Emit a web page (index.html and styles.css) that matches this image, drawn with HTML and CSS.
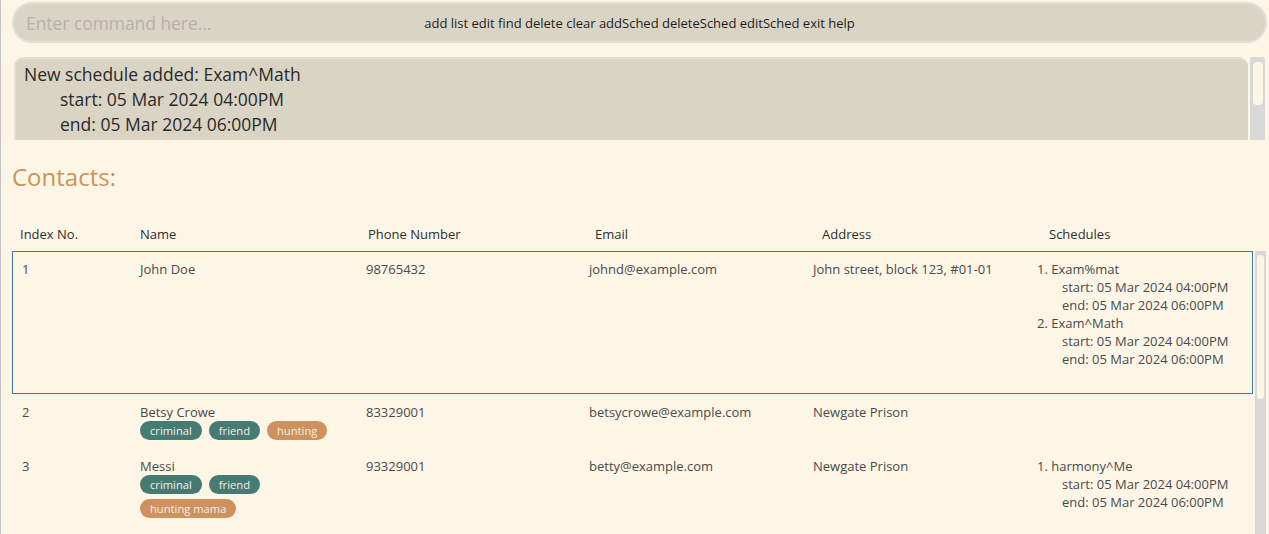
FILE: index.html
```html
<!DOCTYPE html>
<html>
<head>
<meta charset="utf-8">
<link rel="stylesheet" href="styles.css">
</head>
<body>
<div class="app">
  <div class="cmd">
    <span class="placeholder">Enter command here...</span>
    <span class="cmds">add list edit find delete clear addSched deleteSched editSched exit help</span>
    <span></span>
  </div>

  <div class="result-wrap">
    <div class="result">
      <div>New schedule added: Exam^Math</div>
      <div class="ind">start: 05 Mar 2024 04:00PM</div>
      <div class="ind">end: 05 Mar 2024 06:00PM</div>
    </div>
    <div class="rscroll"><div class="rthumb"></div></div>
  </div>

  <div class="title">Contacts:</div>

  <div class="header">
    <span>Index No.</span>
    <span>Name</span>
    <span>Phone Number</span>
    <span>Email</span>
    <span>Address</span>
    <span>Schedules</span>
  </div>

  <div class="list-wrap">
    <div class="list">
      <div class="row selected">
        <span>1</span>
        <div class="name"><div>John Doe</div></div>
        <span>98765432</span>
        <span>johnd@example.com</span>
        <span>John street, block 123, #01-01</span>
        <div class="scheds">
          <div>1. Exam%mat</div>
          <div class="ind">start: 05 Mar 2024 04:00PM</div>
          <div class="ind">end: 05 Mar 2024 06:00PM</div>
          <div>2. Exam^Math</div>
          <div class="ind">start: 05 Mar 2024 04:00PM</div>
          <div class="ind">end: 05 Mar 2024 06:00PM</div>
        </div>
      </div>
      <div class="row">
        <span>2</span>
        <div class="name">
          <div>Betsy Crowe</div>
          <div class="tags"><span class="tag teal">criminal</span><span class="tag teal">friend</span><span class="tag orange">hunting</span></div>
        </div>
        <span>83329001</span>
        <span>betsycrowe@example.com</span>
        <span>Newgate Prison</span>
        <div></div>
      </div>
      <div class="row">
        <span>3</span>
        <div class="name">
          <div>Messi</div>
          <div class="tags"><span class="tag teal">criminal</span><span class="tag teal">friend</span><span class="tag orange">hunting mama</span></div>
        </div>
        <span>93329001</span>
        <span>betty@example.com</span>
        <span>Newgate Prison</span>
        <div class="scheds">
          <div>1. harmony^Me</div>
          <div class="ind">start: 05 Mar 2024 04:00PM</div>
          <div class="ind">end: 05 Mar 2024 06:00PM</div>
        </div>
      </div>
    </div>
    <div class="lscroll"><div class="lthumb"></div></div>
  </div>
</div>
</body>
</html>
```

FILE: styles.css
```css
html, body {
  margin: 0;
  padding: 0;
  height: 100%;
  overflow: hidden;
  background: #fdf6e6;
}
body {
  font-family: "Open Sans", "Noto Sans", sans-serif;
  border-left: 1px solid #c4c4c4;
  box-sizing: border-box;
}
.app {
  display: flex;
  flex-direction: column;
  padding: 2px 2px 0 11px;
  height: 100%;
  box-sizing: border-box;
}
.cmd {
  display: grid;
  grid-template-columns: 1fr auto 1fr;
  align-items: center;
  height: 41px;
  box-sizing: border-box;
  background: #dad4c5;
  border: 2px solid #e3dfd6;
  border-radius: 20px;
  padding: 0 12px;
}
.placeholder {
  font-size: 17.4px;
  color: #b5b1a8;
}
.cmds {
  font-size: 13px;
  color: #1e1e1e;
}
.result-wrap {
  display: flex;
  margin-top: 14px;
  margin-left: 2px;
  margin-right: 2px;
  height: 83px;
  gap: 2px;
}
.result {
  flex: 1;
  background: #dad4c5;
  border-top: 2px solid #e3dfd6;
  border-left: 2px solid #e3dfd6;
  border-radius: 9px 9px 0 0;
  padding: 3px 8px 0;
  font-size: 17.5px;
  line-height: 25px;
  color: #2a2a2a;
}
.result .ind {
  padding-left: 36px;
}
.rscroll {
  width: 15px;
  background: #d8d8d8;
  border-radius: 2px 2px 0 0;
  padding: 5px 2px 0 3px;
  box-sizing: border-box;
}
.rthumb {
  height: 43px;
  background: #fdf6e6;
  border-radius: 4px;
}
.title {
  margin-top: 21px;
  font-size: 24px;
  line-height: 32px;
  color: #d09357;
}
.header {
  display: grid;
  grid-template-columns: 120px 228px 227px 227px 227px auto;
  margin-top: 32px;
  padding-left: 8px;
  font-size: 13px;
  line-height: 18px;
  color: #2e2e2e;
}
.list-wrap {
  display: flex;
  margin-top: 8px;
  flex: 1;
  gap: 2px;
  min-height: 0;
}
.list {
  flex: 1;
  overflow: hidden;
}
.row {
  display: grid;
  grid-template-columns: 118px 226px 223px 224px 224px auto;
  border: 1px solid transparent;
  padding: 8px 0 7px 9px;
  font-size: 13px;
  line-height: 18px;
  color: #4a4a4a;
}
.row.selected {
  border-color: #3e7b8e;
}
.scheds {
  padding-bottom: 18px;
}
.scheds .ind {
  padding-left: 25px;
}
.tags {
  display: flex;
  flex-wrap: wrap;
  gap: 5px 7px;
  max-width: 205px;
}
.tag {
  font-size: 11.2px;
  line-height: 19px;
  height: 19px;
  padding: 0 10px;
  border-radius: 10px;
  color: #f2eee4;
}
.tag.teal {
  background: #467b74;
}
.tag.orange {
  background: #cf915e;
}
.lscroll {
  width: 11px;
  background: #d8d8d8;
  padding: 4px 2px 0 2px;
  box-sizing: border-box;
  margin-right: 1px;
}
.lthumb {
  height: 144px;
  background: #fdf6e6;
  border-radius: 4px;
}
```
